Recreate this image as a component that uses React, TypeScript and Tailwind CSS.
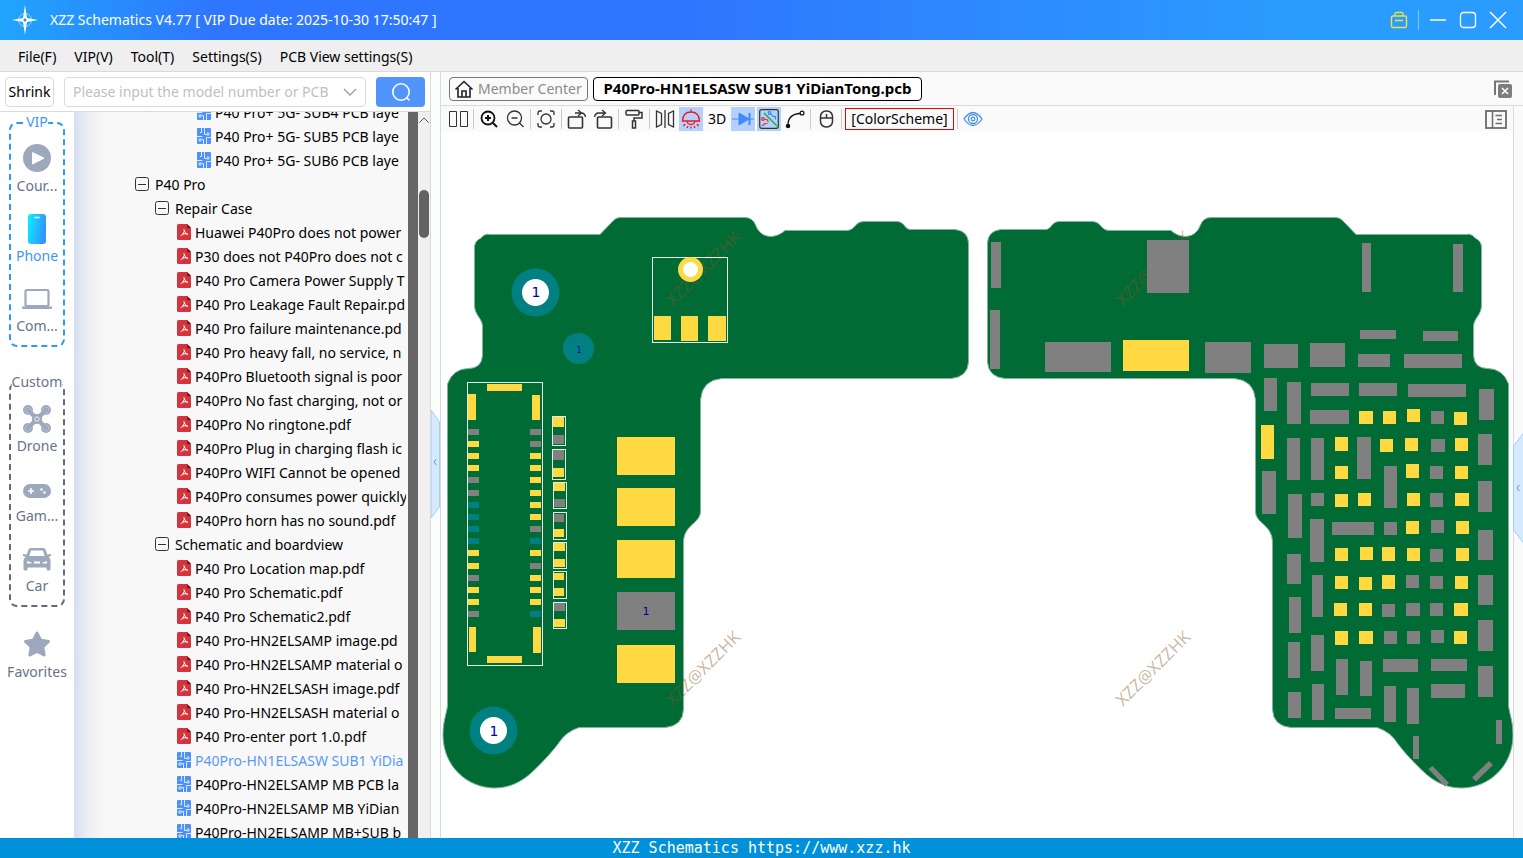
import type { ReactNode } from 'react'
import { FaStar } from 'react-icons/fa'

type Rect = [number, number, number, number]

const YELLOW = '#ffd942'
const GRAY = '#808080'
const TEAL = '#008080'
const BOARD = '#006b34'

const menus = ['File(F)', 'VIP(V)', 'Tool(T)', 'Settings(S)', 'PCB View settings(S)']

type TreeItem = { kind: 'folder' | 'pdf' | 'pcb'; indent: string; label: string; active?: boolean }

const L1 = 'pl-[61px]'
const L2 = 'pl-[81px]'
const L3 = 'pl-[103px]'
const L4 = 'pl-[123px]'

const treeItems: TreeItem[] = [
  { kind: 'pcb', indent: L4, label: 'P40 Pro+ 5G- SUB4 PCB laye' },
  { kind: 'pcb', indent: L4, label: 'P40 Pro+ 5G- SUB5 PCB laye' },
  { kind: 'pcb', indent: L4, label: 'P40 Pro+ 5G- SUB6 PCB laye' },
  { kind: 'folder', indent: L1, label: 'P40 Pro' },
  { kind: 'folder', indent: L2, label: 'Repair Case' },
  { kind: 'pdf', indent: L3, label: 'Huawei P40Pro does not power' },
  { kind: 'pdf', indent: L3, label: 'P30 does not P40Pro does not c' },
  { kind: 'pdf', indent: L3, label: 'P40 Pro Camera Power Supply T' },
  { kind: 'pdf', indent: L3, label: 'P40 Pro Leakage Fault Repair.pd' },
  { kind: 'pdf', indent: L3, label: 'P40 Pro failure maintenance.pd' },
  { kind: 'pdf', indent: L3, label: 'P40 Pro heavy fall, no service, n' },
  { kind: 'pdf', indent: L3, label: 'P40Pro Bluetooth signal is poor' },
  { kind: 'pdf', indent: L3, label: 'P40Pro No fast charging, not or' },
  { kind: 'pdf', indent: L3, label: 'P40Pro No ringtone.pdf' },
  { kind: 'pdf', indent: L3, label: 'P40Pro Plug in charging flash ic' },
  { kind: 'pdf', indent: L3, label: 'P40Pro WIFI Cannot be opened' },
  { kind: 'pdf', indent: L3, label: 'P40Pro consumes power quickly' },
  { kind: 'pdf', indent: L3, label: 'P40Pro horn has no sound.pdf' },
  { kind: 'folder', indent: L2, label: 'Schematic and boardview' },
  { kind: 'pdf', indent: L3, label: 'P40 Pro Location map.pdf' },
  { kind: 'pdf', indent: L3, label: 'P40 Pro Schematic.pdf' },
  { kind: 'pdf', indent: L3, label: 'P40 Pro Schematic2.pdf' },
  { kind: 'pdf', indent: L3, label: 'P40 Pro-HN2ELSAMP image.pd' },
  { kind: 'pdf', indent: L3, label: 'P40 Pro-HN2ELSAMP material o' },
  { kind: 'pdf', indent: L3, label: 'P40 Pro-HN2ELSASH image.pdf' },
  { kind: 'pdf', indent: L3, label: 'P40 Pro-HN2ELSASH material o' },
  { kind: 'pdf', indent: L3, label: 'P40 Pro-enter port 1.0.pdf' },
  { kind: 'pcb', indent: L3, label: 'P40Pro-HN1ELSASW SUB1 YiDia', active: true },
  { kind: 'pcb', indent: L3, label: 'P40Pro-HN2ELSAMP MB PCB la' },
  { kind: 'pcb', indent: L3, label: 'P40Pro-HN2ELSAMP MB YiDian' },
  { kind: 'pcb', indent: L3, label: 'P40Pro-HN2ELSAMP MB+SUB b' },
]

// Both sides of the board share one outline, the front one is mirrored
const outline =
  'M1001 229.5H1046C1052 229 1051 221.5 1060 221.5H1092C1102 222 1100 230.5 1110 230.5H1171C1180 239 1195 239 1200 226Q1203 217.5 1211 217.5H1336Q1340 217.5 1343 221L1356 234.5H1466Q1471 233 1475 238Q1482 241 1481.5 249V305C1481.5 315 1474 318 1473.5 326V355Q1474 368 1487 368.5Q1503 368.5 1508.5 384V705C1509 713 1513 720 1513 735C1513 766 1489 788 1461 788C1446 788 1434 781 1426 774C1414 763 1405 753 1398 744Q1391 732 1377 727.5H1291Q1273 726 1272.5 709V543C1272.5 524 1255.5 524 1255.5 511V400Q1254 380 1234 378.5H1005Q988.5 377 987.5 362V243Q988 231 1001 229.5Z'

const leftYellow: Rect[] = [
  [654, 316, 17, 24], [681, 316, 17, 25], [708, 316, 18, 25],
  [487, 384, 35, 7], [468, 394, 8, 26], [532, 395, 8, 25],
  [469, 627, 7, 25], [533, 627, 8, 26], [487, 656, 35, 7],
  [553, 417, 11, 10], [553, 468, 11, 9], [554, 483, 11, 8], [554, 529, 10, 8],
  [554, 543, 11, 8], [554, 559, 11, 8], [554, 573, 10, 7], [554, 588, 10, 8], [554, 619, 11, 8],
  [617, 437, 58, 38], [617, 488, 58, 38], [617, 540, 58, 38], [617, 645, 58, 38],
]

const leftGray: Rect[] = [
  [553, 435, 11, 9], [553, 450, 11, 10], [554, 499, 11, 8], [554, 514, 10, 8], [554, 603, 11, 8],
  [617, 592, 58, 38],
]

const leftFrames: Rect[] = [
  [652.5, 257.5, 75, 85], [467.5, 382.5, 75, 283],
  [552.5, 416.5, 13, 29], [552.5, 449.5, 13, 30], [553.5, 482.5, 13, 26], [553.5, 512.5, 13, 27],
  [553.5, 542.5, 13, 26], [553.5, 571.5, 13, 27], [553.5, 602.5, 13, 26],
]

const pinRows = [429, 441, 453, 465, 477, 490, 502, 514, 526, 538, 550, 563, 575, 587, 599, 611]
const pinsLeft = 'GYYYGGTTTTYYGYYG'
const pinsRight = 'GGYYYYYYGTYGYYYT'
const pinColor: Record<string, string> = { G: GRAY, Y: YELLOW, T: TEAL }

const rightYellow: Rect[] = [
  [1123, 340, 66, 31], [1261, 425, 13, 34],
  [1359, 411, 14, 13], [1383, 411, 13, 13], [1407, 409, 13, 13], [1454, 412, 13, 13],
  [1335, 437, 13, 14], [1380, 439, 13, 13], [1405, 438, 13, 13], [1455, 438, 13, 13],
  [1335, 466, 13, 13], [1406, 464, 13, 14], [1455, 466, 13, 13],
  [1335, 494, 13, 13], [1358, 493, 13, 13], [1407, 493, 13, 13], [1455, 493, 14, 13],
  [1406, 521, 13, 13], [1456, 521, 13, 13],
  [1335, 548, 13, 13], [1360, 547, 13, 13], [1382, 547, 13, 14], [1407, 548, 13, 13], [1456, 548, 13, 13],
  [1335, 576, 13, 13], [1359, 577, 13, 13], [1382, 575, 13, 14], [1455, 576, 13, 13],
  [1334, 603, 13, 13], [1359, 603, 13, 13], [1454, 603, 14, 13],
  [1335, 631, 13, 14], [1359, 631, 14, 13], [1454, 631, 13, 13],
]

const rightGray: Rect[] = [
  [991, 242, 10, 46], [990, 310, 10, 59], [1147, 240, 42, 53], [1045, 342, 66, 30], [1205, 342, 46, 31],
  [1362, 243, 9, 49], [1453, 244, 10, 48], [1360, 330, 36, 9], [1423, 331, 35, 10],
  [1264, 344, 34, 24], [1310, 343, 35, 24], [1358, 354, 32, 13], [1404, 354, 58, 14],
  [1264, 378, 13, 33], [1287, 382, 14, 42], [1311, 383, 38, 13], [1359, 383, 38, 13], [1408, 384, 58, 13],
  [1479, 389, 15, 31], [1310, 410, 39, 14], [1431, 411, 13, 13],
  [1287, 438, 13, 42], [1311, 438, 13, 42], [1357, 437, 14, 42], [1431, 439, 14, 13], [1478, 434, 14, 31],
  [1384, 466, 13, 42], [1430, 466, 13, 13], [1262, 471, 14, 43], [1288, 494, 14, 44],
  [1311, 493, 13, 13], [1430, 493, 13, 14], [1478, 481, 14, 31],
  [1310, 519, 14, 43], [1332, 522, 42, 13], [1384, 522, 13, 13], [1431, 520, 13, 13], [1478, 530, 15, 30],
  [1287, 554, 14, 30], [1430, 549, 13, 13], [1406, 575, 13, 13], [1430, 576, 13, 13],
  [1312, 575, 11, 42], [1478, 575, 15, 30], [1289, 597, 12, 36],
  [1382, 604, 13, 13], [1406, 603, 14, 13], [1430, 603, 13, 13], [1478, 620, 15, 31],
  [1384, 631, 13, 13], [1407, 631, 13, 13], [1431, 630, 13, 13],
  [1288, 642, 12, 36], [1311, 635, 13, 36], [1336, 659, 12, 36], [1360, 661, 12, 35],
  [1383, 659, 35, 13], [1431, 659, 36, 12], [1431, 684, 34, 14], [1478, 666, 15, 31],
  [1288, 692, 13, 26], [1312, 684, 12, 36], [1335, 708, 36, 11], [1384, 686, 12, 36], [1407, 688, 12, 36],
  [1413, 736, 6, 23], [1496, 720, 6, 24],
]

const watermarks = [[673, 307], [1123, 307], [673, 707], [1123, 707]]

function Pads({ rects, fill }: { rects: Rect[]; fill: string }) {
  return (
    <g fill={fill}>
      {rects.map(([x, y, w, h], i) => (
        <rect key={i} x={x} y={y} width={w} height={h} />
      ))}
    </g>
  )
}

function Board() {
  return (
    <svg viewBox="441 132 1072 706" className="block h-full w-full">
      <g fill={BOARD} stroke="#7fb598" strokeWidth="1">
        <path d={outline} />
        <path d={outline} transform="translate(1956 0) scale(-1 1)" />
      </g>

      <g fill="#8a5524" fillOpacity="0.42" fontSize="17">
        {watermarks.map(([x, y]) => (
          <text key={`${x}-${y}`} x={x} y={y} transform={`rotate(-45 ${x} ${y})`}>XZZ@XZZHK</text>
        ))}
      </g>

      <Pads rects={leftYellow} fill={YELLOW} />
      <Pads rects={leftGray} fill={GRAY} />
      {pinRows.map((y, i) => (
        <g key={y}>
          <rect x="468" y={y} width="11" height="6" fill={pinColor[pinsLeft[i]]} />
          <rect x="530" y={y} width="11" height="6" fill={pinColor[pinsRight[i]]} />
        </g>
      ))}
      <g fill="none" stroke="#e6eee9">
        {leftFrames.map(([x, y, w, h], i) => (
          <rect key={i} x={x} y={y} width={w} height={h} />
        ))}
      </g>

      {/* Screw holes and test points */}
      <circle cx="535.5" cy="292.5" r="24" fill={TEAL} />
      <circle cx="535.5" cy="292.5" r="13.5" fill="#fff" />
      <circle cx="493.5" cy="730.5" r="24" fill={TEAL} />
      <circle cx="493.5" cy="730.5" r="13.5" fill="#fff" />
      <circle cx="578.5" cy="348.5" r="15.5" fill={TEAL} />
      <circle cx="690.5" cy="269.5" r="12.5" fill={YELLOW} />
      <circle cx="690.5" cy="269.5" r="7.5" fill="#fff" />
      <g fill="#0000a0" textAnchor="middle" className="font-['DejaVu_Sans',sans-serif]">
        <text x="536" y="297" fontSize="14">1</text>
        <text x="494" y="736" fontSize="14">1</text>
        <text x="579" y="353" fontSize="8">1</text>
        <text x="646" y="615" fontSize="11">1</text>
      </g>

      <Pads rects={rightYellow} fill={YELLOW} />
      <Pads rects={rightGray} fill={GRAY} />
      <g fill={GRAY}>
        <path d="M1428.5 769 1432.5 766 1449 783 1445 786.5Z" />
        <path d="M1489 761 1493 765 1476 781.5 1472 777.5Z" />
      </g>
    </svg>
  )
}

function PdfIcon() {
  return (
    <svg viewBox="0 0 14 16" className="h-4 w-3.5 shrink-0">
      <path d="M1.5 0H10L14 4V14.5Q14 16 12.5 16H1.5Q0 16 0 14.5V1.5Q0 0 1.5 0Z" fill="#d5333d" />
      <path d="M10 0 14 4H11Q10 4 10 3Z" fill="#7c0c12" />
      <path d="M6.8 5.5Q7.5 8.5 10.4 10.6M7.2 7.5Q6.6 10.4 4 11.8M5.6 10.2Q8 9.2 10.6 10" fill="none" stroke="#fff" strokeWidth="1" strokeLinecap="round" />
    </svg>
  )
}

function PcbIcon() {
  return (
    <svg viewBox="0 0 14 16" className="h-4 w-3.5 shrink-0">
      <rect width="14" height="16" rx="1" fill="#4d90fe" />
      <g fill="none" stroke="#fff" strokeWidth="0.8">
        <path d="M4.5 0V4.5H3M7.5 0V6.5H9.5M0 8.5H5.5M14 9.500H9.5V16M6.5 16V11.5H4.5" />
        <circle cx="11" cy="6" r="1.2" />
        <circle cx="3" cy="12" r="1.2" />
      </g>
    </svg>
  )
}

function FolderToggle() {
  return (
    <svg viewBox="0 0 14 14" className="size-3.5 shrink-0" fill="none" stroke="#333">
      <rect x="0.5" y="0.5" width="13" height="13" rx="2" />
      <path d="M3 7.5H11" />
    </svg>
  )
}

function PlayIcon() {
  return (
    <svg viewBox="0 0 28 28" className="size-7">
      <circle cx="14" cy="14" r="14" fill="#9ea8bc" />
      <path d="M9.5 8.5V20L21 14.2Z" fill="#fff" stroke="#fff" strokeLinejoin="round" />
    </svg>
  )
}

function PhoneIcon() {
  return (
    <svg viewBox="0 0 28 30" className="mt-0.5 h-[30px] w-7">
      <defs>
        <linearGradient id="phone" x1="0" x2="1" y1="0" y2="0.3">
          <stop offset="0" stopColor="#0cf0ff" />
          <stop offset="1" stopColor="#2f96ff" />
        </linearGradient>
      </defs>
      <rect x="5" width="18" height="30" rx="3" fill="url(#phone)" />
      <path d="M12 3.5H16" stroke="#fff" strokeWidth="1.5" strokeLinecap="round" />
    </svg>
  )
}

function LaptopIcon() {
  return (
    <svg viewBox="0 0 30 28" className="h-7 w-[30px]">
      <rect x="3.5" y="6" width="23" height="16" rx="1.5" fill="none" stroke="#9ea8bc" strokeWidth="2.2" />
      <path d="M0 22.5H30V24Q30 25 29 25H1Q0 25 0 24Z" fill="#9ea8bc" />
    </svg>
  )
}

function DroneIcon() {
  return (
    <svg viewBox="0 0 28 28" className="mt-0.5 size-7">
      <g fill="#9ea8bc">
        <circle cx="5" cy="5" r="5" />
        <circle cx="23" cy="5" r="5" />
        <circle cx="5" cy="23" r="5" />
        <circle cx="23" cy="23" r="5" />
      </g>
      <path d="M4.5 4.5 23.5 23.5M23.5 4.5 4.5 23.5" stroke="#fff" strokeOpacity="0.4" strokeWidth="5.4" strokeLinecap="round" />
      <path d="M4.5 4.5 23.5 23.5M23.5 4.5 4.5 23.5" stroke="#9ea8bc" strokeWidth="4.4" strokeLinecap="round" />
      <circle cx="14" cy="14" r="5" fill="#9ea8bc" />
      <circle cx="14" cy="14" r="2.2" fill="none" stroke="#fff" strokeWidth="0.8" />
    </svg>
  )
}

function GameIcon() {
  return (
    <svg viewBox="0 0 28 28" className="size-7">
      <rect y="10" width="28" height="14" rx="7" fill="#9ea8bc" />
      <path d="M5 17H11M8 14V20" stroke="#fff" strokeWidth="1.5" />
      <circle cx="18.5" cy="15.5" r="1.2" fill="#fff" />
      <circle cx="21.5" cy="18.5" r="1.2" fill="#fff" />
    </svg>
  )
}

function CarIcon() {
  return (
    <svg viewBox="0 0 28 28" className="mt-0.5 size-7">
      <path
        fillRule="evenodd"
        fill="#9ea8bc"
        d="M8 3H20Q22 3 22.6 4.8L24.2 9.5 28 9V11L25.5 12Q27.5 13 27.5 15.5V24Q27.5 25.5 26 25.5H25Q23.5 25.5 23.5 24V22.5H4.5V24Q4.5 25.5 3 25.5H2Q0.5 25.5 0.5 24V15.5Q0.5 13 2.5 12L0 11V9L3.8 9.5 5.4 4.8Q6 3 8 3ZM8 5.5 6.3 11H21.7L20 5.5ZM4 16V18.5H8.5V17.5ZM24 16V18.5H19.5V17.5ZM11 16.5V18.5H17V16.5Z"
      />
    </svg>
  )
}

function Category({ icon, label, active }: { icon: ReactNode; label: string; active?: boolean }) {
  return (
    <button type="button" className="flex w-full flex-col items-center gap-0.5">
      <span className="flex h-7 items-center justify-center">{icon}</span>
      <span className={active ? 'leading-6 text-[#3d98f8]' : 'leading-6 text-[#66738a]'}>{label}</span>
    </button>
  )
}

function Tool({ label, active, children }: { label: string; active?: boolean; children: ReactNode }) {
  return (
    <button
      type="button"
      aria-label={label}
      className={`mx-px flex h-6 w-6 shrink-0 items-center justify-center ${active ? 'bg-[#b4d1fb]' : ''}`}
    >
      {children}
    </button>
  )
}

function Divider() {
  return <span className="mx-0.5 h-5 w-px shrink-0 bg-[#c9c9c9]"></span>
}

function Glyph({ children, color = '#333' }: { children: ReactNode; color?: string }) {
  return (
    <svg viewBox="0 0 20 20" className="size-5" fill="none" stroke={color} strokeWidth="1.3">
      {children}
    </svg>
  )
}

function Toolbar() {
  return (
    <div className="flex h-[26px] shrink-0 items-center bg-[#fafafa] pl-1">
      <Tool label="Split view">
        <Glyph><path d="M1.5 2.5H8.5V17.5H1.5ZM12.5 2.5H19.5V17.5H12.5Z" strokeWidth="1" /></Glyph>
      </Tool>
      <Divider />
      <Tool label="Zoom in">
        <Glyph color="#111"><circle cx="9" cy="9" r="6.5" strokeWidth="1.8" /><path d="M14 14 18 18M6 9H12M9 6V12" strokeWidth="2" /></Glyph>
      </Tool>
      <Tool label="Zoom out">
        <Glyph><circle cx="9.5" cy="9" r="7" /><path d="M14.5 14 18.5 18M6.5 9H12.5" /></Glyph>
      </Tool>
      <Divider />
      <Tool label="Fit to window">
        <Glyph>
          <circle cx="10" cy="10" r="5" />
          <path d="M2 6V4Q2 2 4 2H6M14 2H16Q18 2 18 4V6M18 14V16Q18 18 16 18H14M6 18H4Q2 18 2 16V14" />
        </Glyph>
      </Tool>
      <Divider />
      <Tool label="Rotate left">
        <Glyph><rect x="1.5" y="8" width="14" height="11" rx="1" strokeWidth="1.6" /><path d="M8 4H15Q18 4.5 18.5 8M11 1 14.5 4 11 7" /></Glyph>
      </Tool>
      <Tool label="Rotate right">
        <Glyph><rect x="4.5" y="8" width="14" height="11" rx="1" strokeWidth="1.6" /><path d="M12 4H5Q2 4.5 1.5 8M9 1 12.5 4 9 7" /></Glyph>
      </Tool>
      <Divider />
      <Tool label="Paint">
        <Glyph><rect x="2" y="1.5" width="13" height="4.5" rx="1" strokeWidth="1.5" /><path d="M15 3.5H18V9H10V11.5M8.5 12H11.5V19H8.5Z" strokeWidth="1.5" /></Glyph>
      </Tool>
      <Divider />
      <Tool label="Mirror">
        <Glyph><path d="M1.5 2V18L6.5 15.5V4.5ZM10 1V19M18.5 2V18L13.5 15.5V4.5Z" /></Glyph>
      </Tool>
      <Tool label="Lamp" active>
        <Glyph color="#f5141e"><path d="M10 0.5V3M1.5 12Q2 3 10 3Q18 3 18.5 12ZM6 12Q6.5 15.5 10 15.5Q13.5 15.5 14 12M4 15 2.5 17M7 17 6 19M10 17.5V19.5M13 17 14 19M16 15 17.5 17" /></Glyph>
      </Tool>
      <Tool label="3D view">3D</Tool>
      <Tool label="Diode" active>
        <svg viewBox="0 0 24 20" className="h-5 w-6" stroke="#4089f8" fill="#4089f8">
          <path d="M1 10H23" /><path d="M8 4V16L18 10Z" /><path d="M18.5 4V16" strokeWidth="2" />
        </svg>
      </Tool>
      <Tool label="Nets" active>
        <Glyph>
          <rect x="0.7" y="0.7" width="18.6" height="18.6" rx="2" strokeWidth="1.2" />
          <path d="M5 4 18 17" stroke="#1bb54a" strokeWidth="1.6" />
          <circle cx="10.5" cy="4" r="1.3" stroke="#2e86f5" strokeWidth="1.2" />
          <path d="M12 5 14 7.5H16.5V10.5" stroke="#2e86f5" strokeWidth="1.2" />
          <circle cx="4" cy="10" r="1.3" stroke="#f02b2b" strokeWidth="1.2" />
          <path d="M5.5 10.5H8L9.5 13M3 17 6 14.5H8.5" stroke="#f02b2b" strokeWidth="1.2" />
        </Glyph>
      </Tool>
      <Tool label="Curve">
        <Glyph color="#111"><path d="M3 16Q3 5 15.5 4.5" /><circle cx="17" cy="4" r="1.9" /><circle cx="3" cy="17" r="1.6" fill="#111" /></Glyph>
      </Tool>
      <Divider />
      <Tool label="Mouse">
        <Glyph><rect x="4.5" y="2" width="12" height="16" rx="5.5" strokeWidth="1.5" /><path d="M4.5 9H16.5M10.5 5V9" strokeWidth="1.5" /></Glyph>
      </Tool>
      <Divider />
      <button type="button" className="mx-px h-[22px] w-[109px] shrink-0 border border-[#f00000] leading-5">[ColorScheme]</button>
      <Divider />
      <Tool label="Show">
        <Glyph color="#4a90e8"><path d="M1 10Q10 -3 19 10Q10 23 1 10Z" /><circle cx="10" cy="10" r="4.5" /><circle cx="10" cy="10" r="1.8" /></Glyph>
      </Tool>
      <button type="button" aria-label="Side panel" className="mr-1.5 ml-auto">
        <svg viewBox="0 0 22 19" className="h-[19px] w-[22px]" fill="none" stroke="#6b6b6b">
          <rect x="1" y="1" width="20" height="17" strokeWidth="1.8" />
          <path d="M7.5 1V18" strokeWidth="1.5" />
          <path d="M10.5 5.5H17M12 9.5H17M10.5 13.5H17" strokeWidth="1.3" />
        </svg>
      </button>
    </div>
  )
}

export default function App() {
  return (
    <div className="flex h-screen flex-col overflow-hidden bg-white font-['Noto_Sans','Open_Sans',sans-serif] text-sm text-black">
      {/* Title bar */}
      <header className="flex h-10 shrink-0 items-center bg-[linear-gradient(90deg,#20a5fc_0%,#2f76fe_14%,#2f76fe_45%,#2b9cff_85%)] px-3 text-white">
        <svg viewBox="0 0 26 30" className="h-[30px] w-[26px]" fill="#fff">
          <circle cx="13" cy="15" r="6.5" fill="none" stroke="#fff" strokeOpacity="0.5" />
          <path d="M13 0 15 13 26 15 15 17 13 30 11 17 0 15 11 13Z" />
          <circle cx="13" cy="15" r="1.5" fill="#2b88fd" />
        </svg>
        <h1 className="ml-3">XZZ Schematics V4.77 [ VIP Due date: 2025-10-30 17:50:47 ]</h1>
        <div className="mr-1 ml-auto flex items-center">
          <button type="button" aria-label="Toolbox">
            <svg viewBox="0 0 18 18" className="size-[18px]" fill="none" stroke="#ece33c" strokeWidth="1.4">
              <rect x="1.5" y="5" width="15" height="11.5" rx="1.5" />
              <path d="M5 5V3Q5 1.5 6.5 1.5H11.5Q13 1.5 13 3V5M5 9.5H13" />
            </svg>
          </button>
          <span className="mx-2.5 h-5 w-px bg-white/40"></span>
          <div className="flex gap-3">
            <button type="button" aria-label="Minimize">
              <svg viewBox="0 0 18 18" className="size-[18px]" stroke="#fff" strokeWidth="1.5"><path d="M1 9H17" /></svg>
            </button>
            <button type="button" aria-label="Maximize">
              <svg viewBox="0 0 18 18" className="size-[18px]" fill="none" stroke="#fff" strokeWidth="1.3"><rect x="1.5" y="1.5" width="15" height="15" rx="3" /></svg>
            </button>
            <button type="button" aria-label="Close">
              <svg viewBox="0 0 18 18" className="size-[18px]" stroke="#fff" strokeWidth="1.5"><path d="M1 1 17 17M17 1 1 17" /></svg>
            </button>
          </div>
        </div>
      </header>

      {/* Menu bar */}
      <nav className="flex h-8 shrink-0 items-center gap-[18px] border-b border-[#dadada] bg-[#efefef] px-[18px] pt-0.5">
        {menus.map((menu) => (
          <button key={menu} type="button">{menu}</button>
        ))}
      </nav>

      <main className="flex min-h-0 flex-1">
        {/* File browser */}
        <section className="flex w-[431px] shrink-0 flex-col border-r border-[#dadada]">
          <div className="flex h-10 shrink-0 items-center gap-2.5 border-b border-[#dadada] px-[5px]">
            <button type="button" className="h-[30px] w-[49px] rounded border border-[#dcdcdc] pt-px">Shrink</button>
            <div className="flex h-[30px] min-w-0 flex-1 items-center rounded border border-[#dcdcdc] px-2">
              <input
                type="text"
                aria-label="Search"
                placeholder="Please input the model number or PCB"
                className="min-w-0 flex-1 pt-px outline-none placeholder:text-[#bcbfc6]"
              />
              <button type="button" aria-label="History" className="ml-2">
                <svg viewBox="0 0 14 14" className="size-3.5" fill="none" stroke="#a0a3aa" strokeWidth="1.5"><path d="M1 4 7 10 13 4" /></svg>
              </button>
            </div>
            <button type="button" aria-label="Find" className="flex h-[30px] w-[49px] items-center justify-center rounded bg-[#5094fc]">
              <svg viewBox="0 0 20 20" className="size-5" fill="none" stroke="#fff" strokeWidth="1.6"><circle cx="10" cy="10" r="8.2" /><path d="M15.5 15.5 18.5 18.5" /></svg>
            </button>
          </div>

          <div className="flex min-h-0 flex-1">
            {/* Categories */}
            <aside className="flex w-[74px] shrink-0 flex-col overflow-hidden pt-2.5">
              <div className="relative mx-[9px] flex flex-col gap-4 rounded-lg border-2 border-dashed border-[#2f9af5] pt-5 pb-[7px]">
                <span className="absolute -top-3 left-1/2 -translate-x-1/2 bg-white leading-5 text-[#3d98f8]">VIP</span>
                <Category icon={<PlayIcon />} label="Cour..." />
                <Category icon={<PhoneIcon />} label="Phone" active />
                <Category icon={<LaptopIcon />} label="Com..." />
              </div>
              <div className="relative mx-[9px] mt-[35px] flex flex-col gap-4 rounded-lg border-2 border-dashed border-[#5f6b80] pt-5 pb-[7px]">
                <span className="absolute -top-3 left-1/2 -translate-x-1/2 bg-white leading-5 text-[#66738a]">Custom</span>
                <Category icon={<DroneIcon />} label="Drone" />
                <Category icon={<GameIcon />} label="Gam..." />
                <Category icon={<CarIcon />} label="Car" />
              </div>
              <div className="mt-[23px]">
                <Category icon={<FaStar className="size-7 text-[#9ea8bc]" />} label="Favorites" />
              </div>
            </aside>

            {/* Tree */}
            <div className="min-w-0 flex-1 overflow-hidden bg-[linear-gradient(90deg,#d5dff2_0px,#e9ecf3_12px,#f8f8f8_30px)] pr-0.5">
              <ul className="-mt-3">
                {treeItems.map((item) => (
                  <li key={item.label} className={`h-6 overflow-hidden ${item.indent}`}>
                    <button type="button" className={`flex h-6 items-center whitespace-nowrap ${item.active ? 'text-[#5a98f8]' : ''}`}>
                      {item.kind === 'folder' && <FolderToggle />}
                      {item.kind === 'pdf' && <PdfIcon />}
                      {item.kind === 'pcb' && <PcbIcon />}
                      <span className={item.kind === 'folder' ? 'ml-1.5 pt-0.5' : 'ml-1 pt-0.5'}>{item.label}</span>
                    </button>
                  </li>
                ))}
              </ul>
            </div>
            <div className="w-2.5 shrink-0 bg-[#666]"></div>
            <div className="flex w-3 shrink-0 flex-col items-center bg-[#f0f0f0]">
              <svg viewBox="0 0 10 8" className="mt-1 h-2 w-2.5" fill="none" stroke="#555"><path d="M0.5 6.5 5 2 9.5 6.5" /></svg>
              <span className="mt-[66px] h-12 w-2.5 rounded-full bg-[#636363]"></span>
            </div>
          </div>
        </section>

        {/* Splitter */}
        <button type="button" aria-label="Collapse file list" className="flex w-[9px] shrink-0 items-center justify-center bg-[#fbfffb]">
          <svg viewBox="0 0 9 112" className="mt-5 h-28 w-[9px]">
            <path d="M0 1 8.5 13V98L0 109Z" fill="#d6eaff" stroke="#9fd0fb" />
            <path d="M5.5 50 3 53 5.5 56" fill="none" stroke="#4a9df0" />
          </svg>
        </button>

        {/* Viewer */}
        <section className="flex min-w-0 flex-1 flex-col border-l border-[#dadada]">
          <div className="flex h-[34px] shrink-0 items-center gap-[5px] border-b border-[#dadada] bg-[#fafafa] pl-2">
            <button type="button" className="flex h-6 w-[139px] shrink-0 items-center rounded border border-[#777] pl-1 text-[#8c8c8c]">
              <svg viewBox="0 0 20 20" className="size-5 shrink-0" fill="none" stroke="#222" strokeWidth="1.6">
                <path d="M1.5 10.5 10 2.5 18.5 10.5M4 9V18H16V9" /><path d="M8 18V12H12V18" />
              </svg>
              <span className="ml-1 whitespace-nowrap">Member Center</span>
            </button>
            <button type="button" className="flex h-6 w-[329px] shrink-0 items-center justify-center rounded border border-black bg-white text-[15px] font-bold whitespace-nowrap">
              P40Pro-HN1ELSASW SUB1 YiDianTong.pcb
            </button>
            <button type="button" aria-label="Close all tabs" className="mr-[11px] ml-auto">
              <svg viewBox="0 0 18 18" className="size-[18px]">
                <path d="M1 15V1.5H15" fill="none" stroke="#777" strokeWidth="2" />
                <rect x="4" y="4" width="14" height="14" rx="2" fill="#7d7d7d" />
                <path d="M8 8 14 14M14 8 8 14" stroke="#fff" strokeWidth="1.5" />
              </svg>
            </button>
          </div>

          <div className="flex min-h-0 flex-1">
            <div className="flex min-w-0 flex-1 flex-col">
              <Toolbar />
              <div className="min-h-0 flex-1">
                <Board />
              </div>
            </div>
            <button type="button" aria-label="Expand side panel" className="flex w-2.5 shrink-0 items-center bg-[#fafafa] shadow-[inset_1px_0_0_#dadada]">
              <svg viewBox="0 0 10 112" className="mt-8 h-28 w-2.5">
                <path d="M10.5 1 0.5 14V98L10.5 111" fill="#d6eaff" stroke="#9fd0fb" />
                <path d="M6.5 53 4 56 6.5 59" fill="none" stroke="#4a9df0" />
              </svg>
            </button>
          </div>
        </section>
      </main>

      <footer className="h-5 shrink-0 bg-[#0091da] text-center font-['DejaVu_Sans_Mono',monospace] text-[15px] leading-5 text-white">
        XZZ Schematics <a href="https://www.xzz.hk">https://www.xzz.hk</a>
      </footer>
    </div>
  )
}
